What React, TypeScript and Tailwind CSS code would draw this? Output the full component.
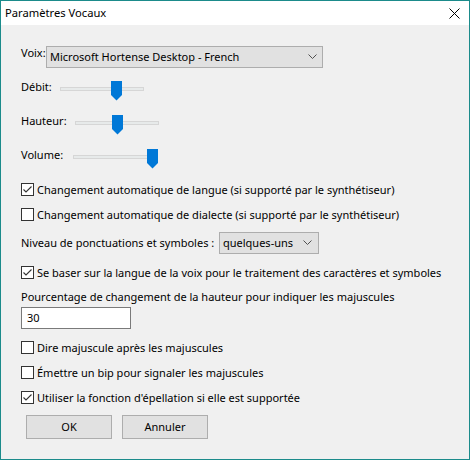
import React from "react";

const font = { fontFamily: '"Noto Sans", "Segoe UI", sans-serif' };

function Thumb() {
  return (
    <svg width="11" height="20" viewBox="0 0 11 20" className="block">
      <polygon points="0,0 11,0 11,14 5.5,19.5 0,14" fill="#0078d7" />
    </svg>
  );
}

function Slider({ labelW, label, thumbLeft }: { labelW: string; label: string; thumbLeft: number }) {
  return (
    <div className="flex h-[20px] items-start">
      <div className={`${labelW} leading-[16px] -mt-[2px]`}>{label}</div>
      <div className="relative w-[84px] h-[20px]">
        <div className="mt-[6px] h-[4px] border border-[#d6d6d6] bg-[#e7eaea]" />
        <div className="absolute top-0" style={{ left: thumbLeft }}>
          <Thumb />
        </div>
      </div>
    </div>
  );
}

function Chevron() {
  return (
    <svg width="9" height="6" viewBox="0 0 9 6" className="block">
      <polyline points="0.5,0.5 4.5,4.5 8.5,0.5" fill="none" stroke="#505050" strokeWidth="1" />
    </svg>
  );
}

function Check({ checked, label, mt }: { checked: boolean; label: string; mt: string }) {
  return (
    <div className={`flex h-[13px] items-center ${mt}`}>
      <div className="w-[13px] h-[13px] border border-[#333333] bg-white flex-none">
        {checked && (
          <svg width="11" height="11" viewBox="0 0 11 11" className="block">
            <polyline points="1.5,5.5 4,8 9.5,2.5" fill="none" stroke="#333333" strokeWidth="1.1" />
          </svg>
        )}
      </div>
      <div className="ml-[3px] leading-[16px] whitespace-nowrap">{label}</div>
    </div>
  );
}

export default function App() {
  return (
    <div
      className="w-[470px] h-[460px] border border-[#1b8b8b] bg-[#f0f0f0] text-[11px] text-black flex flex-col overflow-hidden"
      style={font}
    >
      <div className="h-[24px] bg-white flex items-center justify-between pl-[4px] pr-[9px] flex-none">
        <div className="leading-[16px] text-[11.2px]">Paramètres Vocaux</div>
        <svg width="11" height="11" viewBox="0 0 11 11" className="block">
          <line x1="0.5" y1="0.5" x2="10.5" y2="10.5" stroke="#000" strokeWidth="1" />
          <line x1="10.5" y1="0.5" x2="0.5" y2="10.5" stroke="#000" strokeWidth="1" />
        </svg>
      </div>
      <div className="flex flex-col pl-[20px]">
        <div className="flex items-start mt-[21px] h-[22px]">
          <div className="w-[25px] leading-[16px] -mt-[1px]">Voix:</div>
          <div className="w-[277px] h-[22px] border border-[#adadad] bg-[#e1e1e1] flex items-center justify-between pl-[3px] pr-[5px]">
            <span className="leading-[16px] whitespace-nowrap">Microsoft Hortense Desktop - French</span>
            <Chevron />
          </div>
        </div>
        <div className="mt-[13px]">
          <Slider labelW="w-[39px]" label="Débit:" thumbLeft={51} />
        </div>
        <div className="mt-[14px]">
          <Slider labelW="w-[54px]" label="Hauteur:" thumbLeft={37} />
        </div>
        <div className="mt-[14px]">
          <Slider labelW="w-[52px]" label="Volume:" thumbLeft={74} />
        </div>
        <Check mt="mt-[14px]" checked label="Changement automatique de langue (si supporté par le synthétiseur)" />
        <Check mt="mt-[12px]" checked={false} label="Changement automatique de dialecte (si supporté par le synthétiseur)" />
        <div className="flex items-center mt-[11px] h-[22px]">
          <div className="w-[198px] leading-[16px] whitespace-nowrap">Niveau de ponctuations et symboles :</div>
          <div className="w-[100px] h-[22px] border border-[#adadad] bg-[#e1e1e1] flex items-center justify-between pl-[3px] pr-[6px]">
            <span className="leading-[16px]">quelques-uns</span>
            <Chevron />
          </div>
        </div>
        <Check mt="mt-[12px]" checked label="Se baser sur la langue de la voix pour le traitement des caractères et symboles" />
        <div className="mt-[10px] leading-[16px] whitespace-nowrap">Pourcentage de changement de la hauteur pour indiquer les majuscules</div>
        <div className="mt-[2px] w-[110px] h-[22px] border border-[#7a7a7a] bg-white flex items-center pl-[5px]">
          <span className="leading-[16px]">30</span>
        </div>
        <Check mt="mt-[12px]" checked={false} label="Dire majuscule après les majuscules" />
        <Check mt="mt-[12px]" checked={false} label="Émettre un bip pour signaler les majuscules" />
        <Check mt="mt-[12px]" checked label="Utiliser la fonction d'épellation si elle est supportée" />
        <div className="flex mt-[11px] ml-[5px] gap-[10px]">
          <div className="w-[86px] h-[24px] border border-[#adadad] bg-[#e1e1e1] flex items-center justify-center leading-[16px]">OK</div>
          <div className="w-[86px] h-[24px] border border-[#adadad] bg-[#e1e1e1] flex items-center justify-center leading-[16px]">Annuler</div>
        </div>
      </div>
    </div>
  );
}
